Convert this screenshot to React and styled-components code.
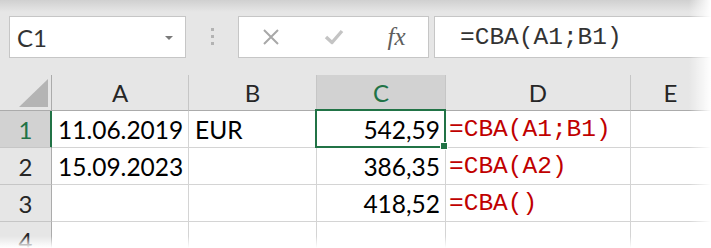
import React from 'react';
import styled, { createGlobalStyle } from 'styled-components';

const GlobalStyle = createGlobalStyle`
	html, body {
		margin: 0;
		padding: 0;
		background: #ffffff;
	}
`;

const GREEN = '#217346';

const Frame = styled.div`
	position: relative;
	width: 711px;
	height: 248px;
	overflow: hidden;
	background: #e6e6e6;
	font-family: Lato, 'Noto Sans', sans-serif;

	&::after {
		content: '';
		position: absolute;
		top: 0;
		right: 0;
		width: 22px;
		height: 100%;
		background: linear-gradient(to right, rgba(255, 255, 255, 0), #ffffff);
		pointer-events: none;
	}

	&::before {
		content: '';
		position: absolute;
		left: 0;
		bottom: 0;
		width: 100%;
		height: 12px;
		background: linear-gradient(to bottom, rgba(255, 255, 255, 0), #ffffff);
		z-index: 3;
		pointer-events: none;
	}
`;

const FormulaBar = styled.div`
	display: flex;
	align-items: flex-start;
	height: 75px;
	box-sizing: border-box;
	padding: 16px 0 0 9px;
	background: linear-gradient(#d0d0d0, #e6e6e6 12px);
`;

const Box = styled.div`
	display: flex;
	align-items: center;
	height: 42px;
	box-sizing: border-box;
	background: #ffffff;
	border: 1px solid #c6c6c6;
`;

const NameBox = styled(Box)`
	width: 177px;
	justify-content: space-between;
	padding: 0 12px 0 7px;
	font-size: 24px;
	color: #333333;
`;

const DropArrow = styled.span`
	width: 0;
	height: 0;
	border-left: 4px solid transparent;
	border-right: 4px solid transparent;
	border-top: 4px solid #7a7a7a;
	margin-top: 2px;
`;

const Grip = styled.div`
	width: 52px;
	display: flex;
	flex-direction: column;
	align-items: center;
	gap: 4px;
	padding-top: 12px;

	span {
		width: 3px;
		height: 3px;
		background: #b3b3b3;
	}
`;

const ButtonsBox = styled(Box)`
	width: 191px;
`;

const FxButton = styled.div`
	width: 63px;
	display: flex;
	justify-content: center;
	align-items: center;
	height: 100%;
	font-family: 'Liberation Serif', 'DejaVu Serif', serif;
	font-style: italic;
	font-size: 25px;
	color: #5f5f5f;
`;

const FormulaInput = styled(Box)`
	flex: 1;
	margin-left: 5px;
	padding-left: 25px;
	font-family: 'Liberation Mono', 'DejaVu Sans Mono', monospace;
	font-size: 24.5px;
	color: #333333;
	border-right: none;
`;

const Sheet = styled.div`
	display: grid;
	grid-template-columns: 52px 137px 128px 129px 185px 1fr;
	grid-auto-rows: 37px;
	grid-template-rows: 36px;
`;

const Corner = styled.div`
	position: relative;
	background: #e6e6e6;
	border-right: 1px solid #ababab;
	border-bottom: 1px solid #ababab;

	&::before {
		content: '';
		position: absolute;
		left: 19px;
		top: 4px;
		width: 29px;
		height: 28px;
		background: #b4b4b4;
		clip-path: polygon(100% 0, 100% 100%, 0 100%);
	}
`;

const ColHead = styled.div`
	background: ${(p) => (p.$active ? '#d2d2d2' : '#e6e6e6')};
	color: ${(p) => (p.$active ? GREEN : '#262626')};
	border-right: 1px solid #c6c6c6;
	border-bottom: 1px solid #ababab;
	text-align: center;
	font-size: 24px;
	line-height: 35px;
`;

const RowHead = styled.div`
	background: ${(p) => (p.$active ? '#d2d2d2' : '#e6e6e6')};
	color: ${(p) => (p.$active ? GREEN : '#262626')};
	border-right: 1px solid ${(p) => (p.$active ? GREEN : '#ababab')};
	border-bottom: 1px solid #c6c6c6;
	box-shadow: ${(p) => (p.$active ? `inset -1px 0 0 ${GREEN}` : 'none')};
	text-align: center;
	font-size: 24px;
	line-height: 37px;
`;

const Cell = styled.div`
	position: relative;
	background: #ffffff;
	border-right: 1px solid #d4d4d4;
	border-bottom: 1px solid #d4d4d4;
	padding: 0 ${(p) => (p.$right ? '5px' : '0')} 0 ${(p) => (p.$formula ? '3px' : '6px')};
	text-align: ${(p) => (p.$right ? 'right' : 'left')};
	font-family: ${(p) => (p.$formula ? "'Liberation Mono', 'DejaVu Sans Mono', monospace" : 'Lato, sans-serif')};
	font-size: ${(p) => (p.$formula ? '24.5px' : '24.5px')};
	color: ${(p) => (p.$formula ? '#c00000' : '#000000')};
	line-height: 37px;
	white-space: nowrap;
`;

const Selection = styled.div`
	position: absolute;
	left: -2px;
	top: -2px;
	right: -1px;
	bottom: -1px;
	border: 2px solid ${GREEN};
	z-index: 2;

	&::after {
		content: '';
		position: absolute;
		right: -4px;
		bottom: -4px;
		width: 6px;
		height: 6px;
		background: ${GREEN};
		border: 1px solid #ffffff;
	}
`;

const CancelIcon = () => (
	<svg width="18" height="16" viewBox="0 0 18 16">
		<path d="M2 1 L16 15 M16 1 L2 15" stroke="#a8a8a8" strokeWidth="2" fill="none" />
	</svg>
);

const EnterIcon = () => (
	<svg width="20" height="16" viewBox="0 0 20 16">
		<path d="M2 8 L8 13.5 L18 2" stroke="#c4c4c4" strokeWidth="3.4" fill="none" strokeLinejoin="round" />
	</svg>
);

const rows = [
	{ n: 1, a: '11.06.2019', b: 'EUR', c: '542,59', d: '=CBA(A1;B1)' },
	{ n: 2, a: '15.09.2023', b: '', c: '386,35', d: '=CBA(A2)' },
	{ n: 3, a: '', b: '', c: '418,52', d: '=CBA()' },
	{ n: 4, a: '', b: '', c: '', d: '' }
];

export default function App() {
	return (
		<Frame>
			<GlobalStyle />
			<FormulaBar>
				<NameBox>
					<span>C1</span>
					<DropArrow />
				</NameBox>
				<Grip>
					<span />
					<span />
					<span />
				</Grip>
				<ButtonsBox>
					<FxButton>
						<CancelIcon />
					</FxButton>
					<FxButton>
						<EnterIcon />
					</FxButton>
					<FxButton>fx</FxButton>
				</ButtonsBox>
				<FormulaInput>=CBA(A1;B1)</FormulaInput>
			</FormulaBar>
			<Sheet>
				<Corner />
				<ColHead>A</ColHead>
				<ColHead>B</ColHead>
				<ColHead $active>C</ColHead>
				<ColHead>D</ColHead>
				<ColHead>E</ColHead>
				{rows.map((r) => (
					<React.Fragment key={r.n}>
						<RowHead $active={r.n === 1}>{r.n}</RowHead>
						<Cell>{r.a}</Cell>
						<Cell>{r.b}</Cell>
						<Cell $right>
							{r.c}
							{r.n === 1 && <Selection />}
						</Cell>
						<Cell $formula>{r.d}</Cell>
						<Cell />
					</React.Fragment>
				))}
			</Sheet>
		</Frame>
	);
}
